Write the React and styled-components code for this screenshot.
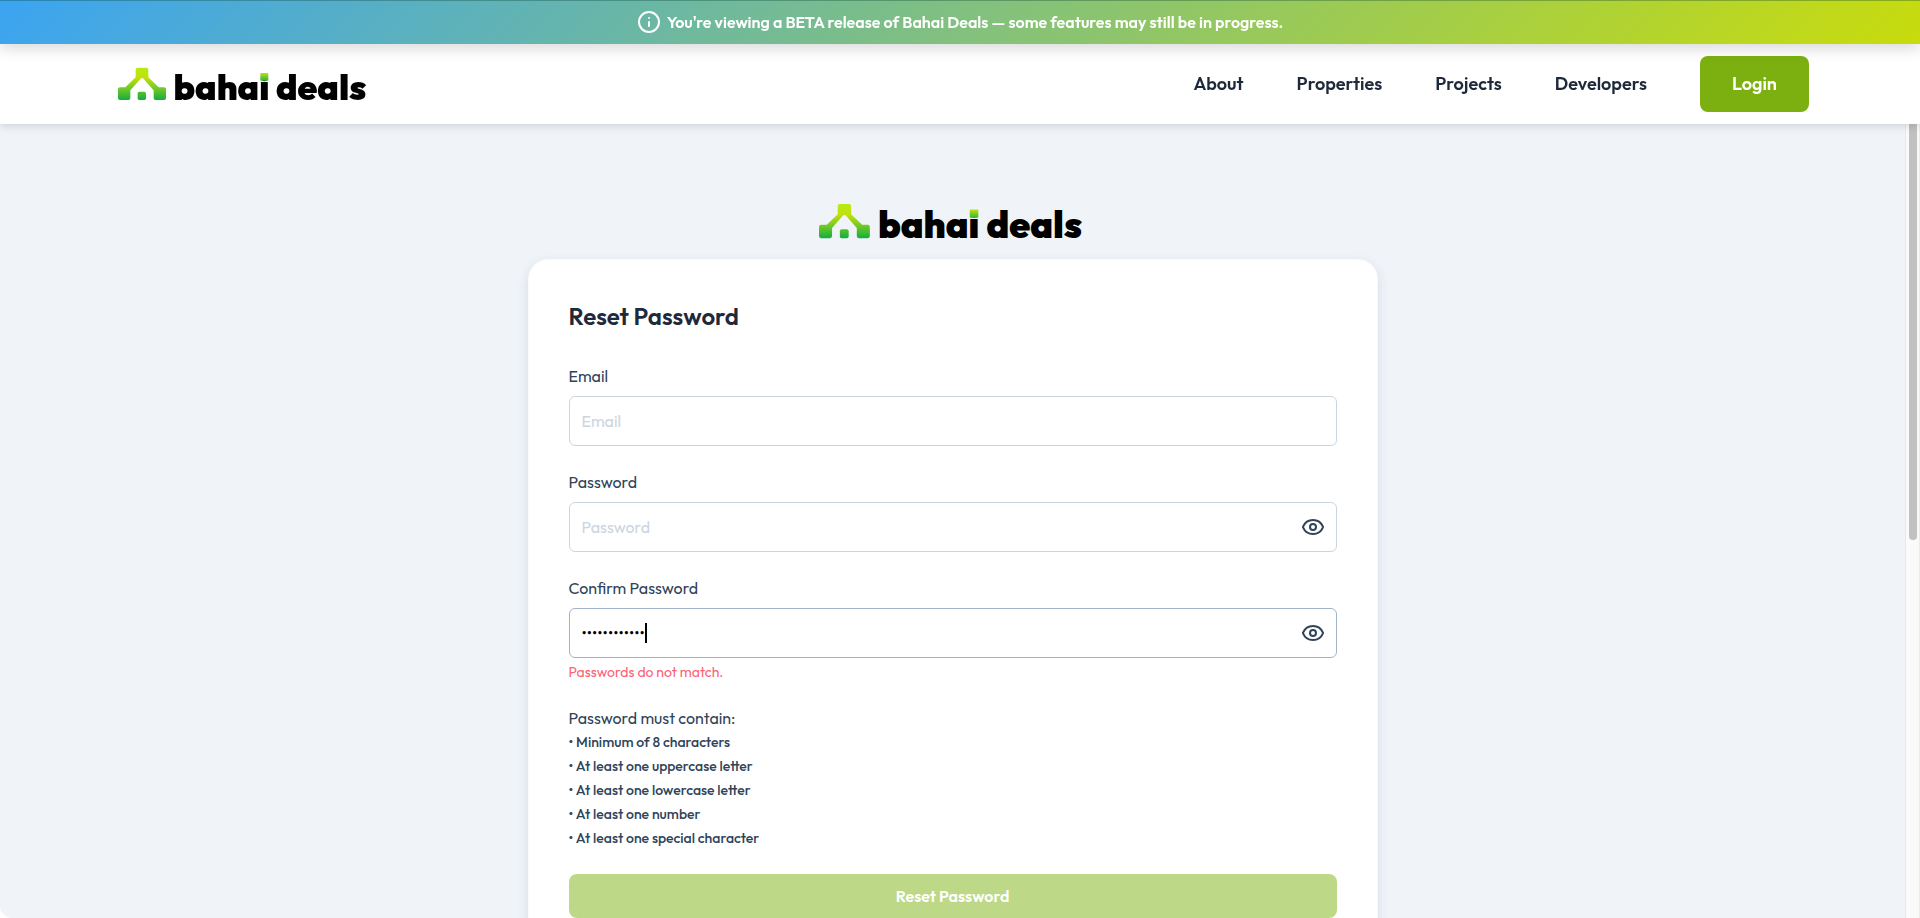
import React, { useState } from "react";
import styled, { createGlobalStyle } from "styled-components";
import { Eye, Info } from "lucide-react";

const GlobalStyle = createGlobalStyle`
  *, *::before, *::after { box-sizing: border-box; }
  body {
    margin: 0;
    background: #ffffff;
    color: #1e293b;
    font-family: "Outfit", "Inter", sans-serif;
    font-size: 16px;
    line-height: 24px;
  }
  button, input { font: inherit; }
`;

const Shell = styled.div`
  display: flex;
  flex-direction: column;
  height: 100vh;
  overflow: hidden;
  border-bottom-left-radius: 12px;
`;

const Banner = styled.div`
  display: flex;
  flex: none;
  align-items: center;
  justify-content: center;
  gap: 6px;
  height: 44px;
  position: relative;
  z-index: 2;
  color: #ffffff;
  font-weight: 600;
  box-shadow: inset 0 1px 0 rgba(0, 60, 40, 0.3), 0 4px 16px rgba(0, 0, 0, 0.16);
  background: linear-gradient(135deg, #3ba4f2, #c8dc0c);
`;

const Header = styled.header`
  display: flex;
  flex: none;
  align-items: center;
  justify-content: space-between;
  height: 80px;
  padding: 0 111px 0 118px;
  position: relative;
  z-index: 1;
  background: #ffffff;
  box-shadow: 0 2px 8px rgba(0, 0, 0, 0.14);
`;

const Nav = styled.nav`
  display: flex;
  align-items: center;
  gap: 53px;
`;

const NavLink = styled.a`
  color: #1e293b;
  font-size: 18px;
  font-weight: 600;
  text-decoration: none;
`;

const LoginLink = styled(NavLink)`
  padding: 16px 32px;
  border-radius: 8px;
  background: #7cb010;
  color: #ffffff;
`;

const Body = styled.div`
  display: flex;
  flex: 1;
  min-height: 0;
`;

const Main = styled.main`
  display: flex;
  flex: 1;
  flex-direction: column;
  align-items: center;
  gap: 15px;
  padding: 75px 24px;
  overflow-y: auto;
  scrollbar-width: none;
  background: #f0f4f9;
`;

const ScrollTrack = styled.div`
  flex: none;
  width: 15px;
  padding: 0 2px 0 3px;
  border-left: 1px solid #e8e8e8;
  border-right: 1px solid #ececec;
  background: #fafafa;
`;

const ScrollThumb = styled.div`
  height: 416px;
  border-radius: 0 0 4px 4px;
  background: #c1c1c1;
`;

const LogoSvg = styled.svg`
  display: block;
  flex: none;
  width: ${(p) => p.$width}px;
  overflow: visible;
  font-family: "Outfit", "Inter", sans-serif;
  font-weight: 900;
`;

const Card = styled.form`
  display: flex;
  flex: none;
  flex-direction: column;
  gap: 24px;
  width: 100%;
  max-width: 850px;
  padding: 40px;
  border: 1px solid #f8fafc;
  border-radius: 20px;
  background: #ffffff;
  box-shadow: 0 4px 12px rgba(30, 50, 80, 0.12);
`;

const Title = styled.h1`
  margin: 0 0 8px;
  font-size: 24px;
  font-weight: 600;
  line-height: 32px;
`;

const FieldGroup = styled.div`
  display: flex;
  flex-direction: column;
`;

const Label = styled.label`
  margin-bottom: 8px;
  color: #2f4359;
`;

const InputBox = styled.div`
  display: flex;
  align-items: center;
  height: 50px;
  padding: 0 11px 0 12px;
  position: relative;
  border: 1px solid ${(p) => (p.$active ? "#a3b3c7" : "#cbd5e1")};
  border-radius: 6px;
  background: #ffffff;
`;

const Input = styled.input`
  flex: 1;
  min-width: 0;
  padding: 0;
  border: 0;
  outline: 0;
  background: transparent;
  color: #000000;

  &::placeholder { color: #cbd5e1; }
`;

const Caret = styled.span`
  position: absolute;
  left: 75px;
  top: 14px;
  width: 2px;
  height: 20px;
  background: #000000;
`;

const EyeButton = styled.button`
  display: flex;
  padding: 0;
  border: 0;
  background: none;
  color: #2f4359;
  cursor: pointer;
`;

const ErrorText = styled.p`
  margin: 4px 0 0;
  color: #fb6374;
  font-size: 14px;
  line-height: 20px;
`;

const Rules = styled.div`
  color: #2f4359;
`;

const RuleList = styled.ul`
  margin: 0;
  padding: 0;
  list-style: none;
  font-size: 14px;
  font-weight: 500;

  li::before { content: "• "; }
`;

const SubmitButton = styled.button`
  height: 44px;
  border: 0;
  border-radius: 8px;
  background: #bdd987;
  color: #ffffff;
  font-weight: 600;
`;

function Logo({ width, id }) {
  return (
    <LogoSvg $width={width} viewBox="0 -14 756 126" role="img" aria-label="bahai deals">
      <defs>
        <linearGradient id={id} x1="0" y1="0" x2="0" y2="97" gradientUnits="userSpaceOnUse">
          <stop offset="0" stopColor="#b5ec14" />
          <stop offset="0.32" stopColor="#c3df0c" />
          <stop offset="0.65" stopColor="#6fc926" />
          <stop offset="1" stopColor="#14ad40" />
        </linearGradient>
        <linearGradient id={`${id}-dot`} x1="0" y1="0" x2="0" y2="1">
          <stop offset="0" stopColor="#bfe010" />
          <stop offset="1" stopColor="#2db83a" />
        </linearGradient>
      </defs>
      <path
        fill={`url(#${id})`}
        d="M59 0H85Q91 0 91 6V29L122 59H138Q144 59 144 65V91Q144 97 138 97H113Q107 97 107 91V68L76 33Q72 29 68 33L37 68V91Q37 97 31 97H6Q0 97 0 91V65Q0 59 6 59H22L53 29V6Q53 0 59 0Z"
      />
      <rect x="59" y="72" width="25" height="25" rx="5" fill={`url(#${id})`} />
      <text x="454" y="97" fontSize="106" textAnchor="end">bahai</text>
      <text x="474" y="97" fontSize="106">deals</text>
      <rect x="427" y="16" width="24" height="23" rx="2" fill={`url(#${id}-dot)`} />
    </LogoSvg>
  );
}

function Field({ id, label, type, placeholder, initial = "", active, error }) {
  const [value, setValue] = useState(initial);
  const [visible, setVisible] = useState(false);
  const isPassword = type === "password";
  return (
    <FieldGroup>
      <Label htmlFor={id}>{label}</Label>
      <InputBox $active={active}>
        <Input
          id={id}
          type={visible ? "text" : type}
          placeholder={placeholder}
          value={value}
          onChange={(e) => setValue(e.target.value)}
        />
        {active && <Caret />}
        {isPassword && (
          <EyeButton type="button" aria-label={`Show ${label}`} onClick={() => setVisible(!visible)}>
            <Eye size={24} />
          </EyeButton>
        )}
      </InputBox>
      {error && <ErrorText>{error}</ErrorText>}
    </FieldGroup>
  );
}

const links = ["About", "Properties", "Projects", "Developers"];
const rules = [
  "Minimum of 8 characters",
  "At least one uppercase letter",
  "At least one lowercase letter",
  "At least one number",
  "At least one special character",
];

export default function App() {
  return (
    <>
      <GlobalStyle />
      <Shell>
        <Banner>
          <Info size={24} />
          <span>You're viewing a BETA release of Bahai Deals — some features may still be in progress.</span>
        </Banner>
        <Header>
          <Logo width={252} id="mark-header" />
          <Nav>
            {links.map((name) => (
              <NavLink key={name} href="#">{name}</NavLink>
            ))}
            <LoginLink href="#">Login</LoginLink>
          </Nav>
        </Header>
        <Body>
          <Main>
            <Logo width={267} id="mark-card" />
            <Card onSubmit={(e) => e.preventDefault()}>
              <Title>Reset Password</Title>
              <Field id="email" label="Email" type="email" placeholder="Email" />
              <Field id="password" label="Password" type="password" placeholder="Password" />
              <Field
                id="confirm"
                label="Confirm Password"
                type="password"
                initial="Password1234"
                active
                error="Passwords do not match."
              />
              <Rules>
                Password must contain:
                <RuleList>
                  {rules.map((rule) => (
                    <li key={rule}>{rule}</li>
                  ))}
                </RuleList>
              </Rules>
              <SubmitButton type="submit" disabled>Reset Password</SubmitButton>
            </Card>
          </Main>
          <ScrollTrack>
            <ScrollThumb />
          </ScrollTrack>
        </Body>
      </Shell>
    </>
  );
}
